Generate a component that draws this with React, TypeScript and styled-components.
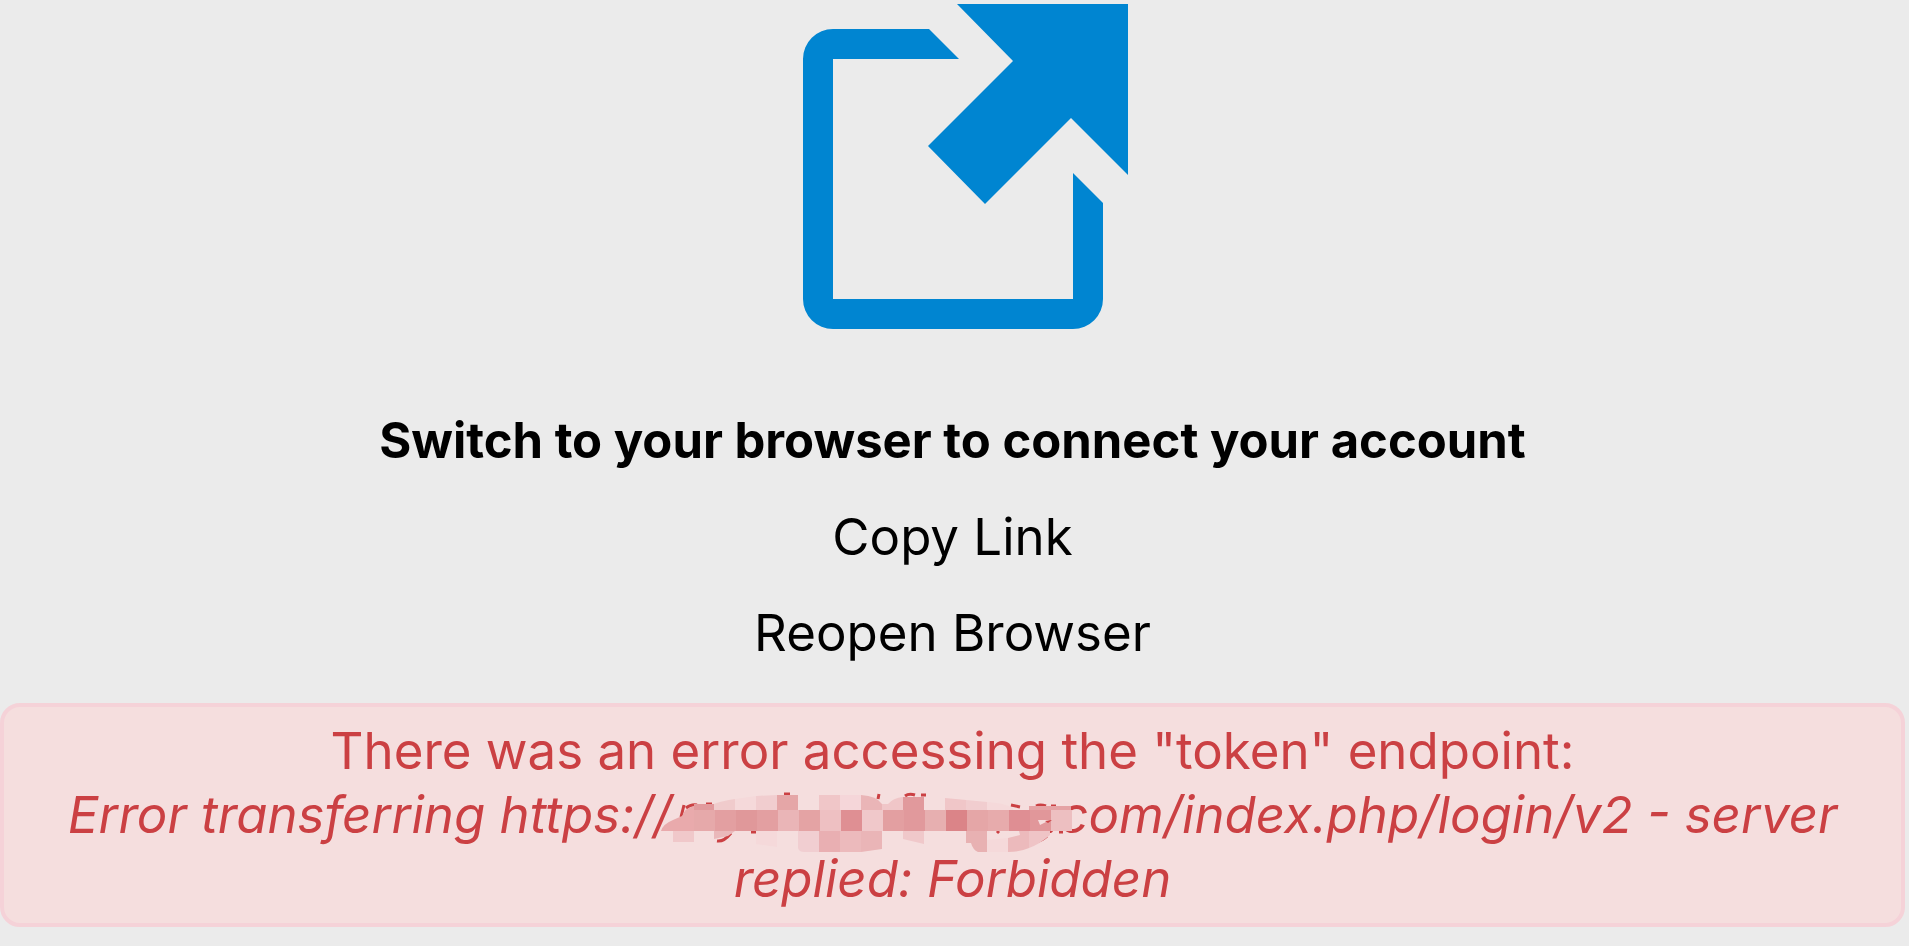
import React from 'react';
import styled, { createGlobalStyle } from 'styled-components';

const GlobalStyle = createGlobalStyle`
  *, *::before, *::after { box-sizing: border-box; }
  body {
    margin: 0;
    background: #ebebeb;
    color: #000;
    font-family: Inter, 'Liberation Sans', sans-serif;
  }
`;

const Page = styled.main`
  display: flex;
  flex-direction: column;
  align-items: center;
  padding: 0 4px 16px 0;
`;

const BrowserIcon = styled.svg`
  display: block;
  width: 352px;
  height: 345px;
  margin-bottom: 64px;
  fill: #0085d1;
`;

const Actions = styled.div`
  display: flex;
  flex-direction: column;
  align-items: center;
  gap: 32px;
  margin-bottom: 38px;
`;

const Heading = styled.h1`
  margin: 0;
  font-size: 49px;
  font-weight: 700;
  line-height: 64px;
  text-align: center;
`;

const ActionButton = styled.button`
  padding: 0;
  border: 0;
  background: none;
  color: inherit;
  font: inherit;
  font-size: 51px;
  line-height: 64px;
  cursor: pointer;
`;

const ErrorBox = styled.div`
  align-self: stretch;
  padding: 12px 48px;
  border: 4px solid #f5d2d8;
  border-radius: 20px;
  background: #f5dede;
  color: #cb4043;
  font-size: 51px;
  line-height: 64px;
  text-align: center;
`;

const ErrorLine = styled.p`
  margin: 0;
`;

const ErrorDetail = styled.em`
  display: block;
`;

const Redacted = styled.span`
  position: relative;
  display: inline-block;
  width: 373px;
  height: 64px;
  vertical-align: top;
`;

const Mosaic = styled.svg`
  position: absolute;
  top: 0;
  left: -12px;
  width: 420px;
  height: 80px;
`;

const middleRow = [
  '#e9aaac', '#e6a9aa', '#e39fa1', '#e0989a', '#e39fa1', '#eab5b7', '#e4a3a4',
  '#eec0c2', '#df8f93', '#f0c8ca', '#e39fa1', '#e1999c', '#e7afb0', '#db8488',
  '#e5a6a7', '#e7abac', '#df8e93', '#e1979a', '#edbfc1',
];

// Ragged tiles above and below the middle band of the mosaic.
const edgeTiles: [string, string][] = [
  ['#e9aaac', 'M661 831Q663 824 673 820L682 816Q685 808 694 806V831Z'],
  ['#e19a9d', 'M694 804H714V810H694Z'],
  ['#f0cbcc', 'M714 804Q722 801 735 799V810H714Z'],
  ['#f5d9da', 'M735 799L756 796V810H735Z'],
  ['#f1cdcf', 'M756 796L777 795V810H756Z'],
  ['#e5a6a7', 'M777 795H798V810H777Z'],
  ['#f0c6c8', 'M819 795H840V810H819Z'],
  ['#f5d6d9', 'M840 795H861V810H840Z'],
  ['#eab5b7', 'M861 795Q877 796 882 804V810H861Z'],
  ['#f0c6c8', 'M882 804H888Q893 798 903 797V810H882Z'],
  ['#e1999c', 'M903 797H924V810H903Z'],
  ['#f0c6c8', 'M945 798L966 800V810H945Z'],
  ['#f1cdcf', 'M966 800L987 802V810H966Z'],
  ['#f5d9da', 'M987 802Q1004 803 1013 808V810H987Z'],
  ['#e5a3a5', 'M1029 806H1071V810H1029Z'],
  ['#f0c8ca', 'M673 831H694V842H673Z'],
  ['#eab8ba', 'M714 831H735L728 836L714 839Z'],
  ['#f5d9da', 'M756 831H777V847L756 844Z'],
  ['#f1ced1', 'M798 831H819V852H804Q799 852 798 848Z'],
  ['#e9afb2', 'M819 831H840V852H819Z'],
  ['#ecbabc', 'M840 831H861V852H840Z'],
  ['#eab5b7', 'M861 831H882V849L861 852Z'],
  ['#f0c8ca', 'M903 831H924V844L903 839Z'],
  ['#e8b1b2', 'M966 831H987V852H978Q973 850 971 843H966Z'],
  ['#f5d9da', 'M987 840L1008 838V852H987Z'],
  ['#ecbabc', 'M1008 838L1020 835L1019 831H1029V848Q1020 852 1008 852Z'],
  ['#efc4c6', 'M1029 831H1050V835Q1040 844 1029 848Z'],
];

function RedactedHost() {
  return (
    <Redacted>
      <Mosaic viewBox="660 783 420 80" aria-hidden="true">
        <g fill="none" stroke="#cb4043" strokeWidth="3">
          <path d="M684 805L681 817M686 808Q691 804 697 805M706 804H712" />
          <path d="M717 841Q724 842 731 833M751 832H756" />
          <path d="M784 794H790M879 794L878 799M905 796Q909 793 915 795M921 795H926" />
          <path d="M1011 805L1020 807M1036 806Q1040 804 1046 806M1051 806H1056" />
          <path d="M999 831L997 833M1036 842Q1043 840 1047 836M1059 832H1063" />
        </g>
        {middleRow.map((color, i) => (
          i > 0 && <rect key={i} x={673 + i * 21} y="810" width="21" height="21" fill={color} />
        ))}
        {edgeTiles.map(([color, d]) => <path key={d} fill={color} d={d} />)}
        <path fill="#f5dede" d="M1038 820H1050L1040 825Z" />
        <path fill="#cb4043" d="M1045 821L1052 820L1048 823Z" />
      </Mosaic>
    </Redacted>
  );
}

export default function App() {
  return (
    <>
      <GlobalStyle />
      <Page>
        <BrowserIcon viewBox="776 0 352 345" aria-hidden="true">
          <path d="M928 29H832A30 30 0 0 0 802 59V299A30 30 0 0 0 832 329H1072A30 30 0 0 0 1102 299V203L1072 173V299H832V59H958Z" />
          <path d="M956 4H1127V175L1070 118L984 204L927 146L1012 61Z" />
        </BrowserIcon>
        <Actions>
          <Heading>Switch to your browser to connect your account</Heading>
          <ActionButton type="button">Copy Link</ActionButton>
          <ActionButton type="button">Reopen Browser</ActionButton>
        </Actions>
        <ErrorBox role="alert">
          <ErrorLine>There was an error accessing the "token" endpoint:</ErrorLine>
          <ErrorDetail>
            Error transferring https://<RedactedHost />.com/index.php/login/v2 - server replied: Forbidden
          </ErrorDetail>
        </ErrorBox>
      </Page>
    </>
  );
}
